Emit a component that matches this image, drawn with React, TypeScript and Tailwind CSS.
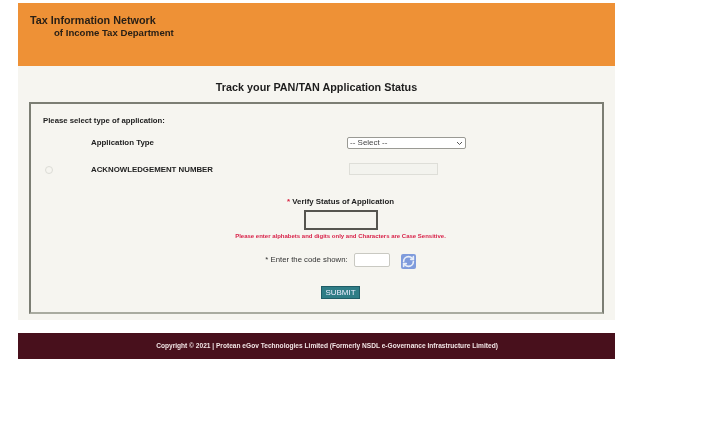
import { RefreshCw } from "lucide-react";

export default function App() {
  return (
    <div className="min-h-[434px] w-[706px] overflow-hidden bg-white pl-[18px] pt-[3px] font-['Liberation_Sans',Arial,sans-serif] text-[#222] blur-[0.4px]">
      <div className="w-[597px]">
        <header className="h-[63px] bg-[#ee9136] pl-3 pt-[10px] font-bold text-[#2a2016]">
          <div className="text-[10.8px] leading-[14px]">Tax Information Network</div>
          <div className="pl-6 text-[9.6px] leading-[11px]">of Income Tax Department</div>
        </header>

        <main className="h-[254px] bg-[#f6f5f0] px-[11px] pt-[14px]">
          <h1 className="text-center text-[10.8px] font-bold leading-[14px] text-[#1d1d1d]">
            Track your PAN/TAN Application Status
          </h1>

          <section className="mt-[8px] h-[212px] border-2 border-[#7c7e74] border-b-[#a9aba0] pl-3 pt-[12px]">
            <p className="text-[7.75px] font-bold leading-[10px]">Please select type of application:</p>

            <div className="mt-[10px] flex h-[14px] items-center pl-[48px]">
              <span className="w-[256px] text-[7.9px] font-bold">Application Type</span>
              <div className="flex h-[12px] w-[119px] items-center justify-between rounded-[2px] border border-[#9a9a94] bg-white px-[2px] text-[8px] text-[#444]">
                <span>-- Select --</span>
                <svg width="7" height="5" viewBox="0 0 7 5" fill="none" stroke="#555" strokeWidth="1">
                  <path d="M1 1l2.5 2.5L6 1" />
                </svg>
              </div>
            </div>

            <div className="mt-[13px] flex h-[13px] items-center">
              <span className="ml-[2px] size-[8px] rounded-full border border-[#dcdcd6]" />
              <span className="ml-[38px] w-[258px] text-[7.85px] font-bold">ACKNOWLEDGEMENT NUMBER</span>
              <div className="mb-[2px] h-[12px] w-[89px] border border-[#deded8] bg-[#f3f3ee]" />
            </div>

            <div className="mt-[20px] flex flex-col items-center pl-[36px]">
              <div className="text-[7.85px] font-bold leading-[11px]">
                <span className="text-[#d8213f]">* </span>Verify Status of Application
              </div>
              <div className="mt-[3px] h-[20px] w-[74px] border-2 border-[#55544f] bg-[#f4f3ee]" />
              <p className="mt-[2px] text-[6px] font-bold leading-[8px] text-[#d8234a]">
                Please enter alphabets and digits only and Characters are Case Sensitive.
              </p>
              <div className="mt-[11px] flex h-[17px] items-center">
                <span className="text-[7.75px] text-[#333]">* Enter the code shown:</span>
                <div className="ml-[6px] h-[14px] w-[36px] rounded-[2px] border border-[#c9c9c2] bg-white" />
                <RefreshCw className="ml-[11px] mt-[4px] size-[15px] rounded-[2px] bg-[#7f9bdc] p-[1px] text-[#e8eef8]" strokeWidth={3} />
              </div>
              <button className="mt-[18px] h-[13px] w-[39px] border border-[#1f5c66] bg-[#2f7d86] text-[8px] leading-[11px] text-[#eef]">
                SUBMIT
              </button>
            </div>
          </section>
        </main>

        <div className="h-[13px] bg-white" />
        <footer className="flex h-[26px] items-center justify-center bg-[#48101c] pl-[21px] text-[6.6px] font-bold text-[#f0e4e4]">
          Copyright © 2021 | Protean eGov Technologies Limited (Formerly NSDL e-Governance Infrastructure Limited)
        </footer>
      </div>
    </div>
  );
}
